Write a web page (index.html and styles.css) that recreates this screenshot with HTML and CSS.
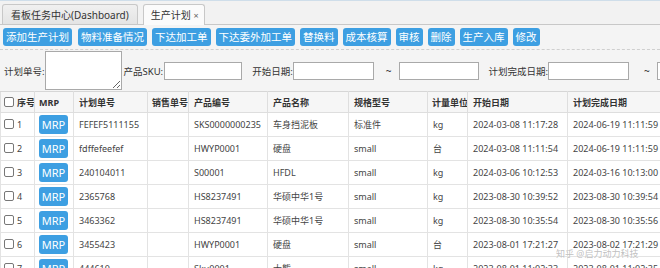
FILE: index.html
```html
<!DOCTYPE html>
<html lang="zh">
<head>
<meta charset="utf-8">
<title>生产计划</title>
<link rel="stylesheet" href="styles.css">
</head>
<body>
<div class="page">
  <div class="tabs">
    <div class="tab">看板任务中心(Dashboard)</div>
    <div class="tab active">生产计划 <span class="close">×</span></div>
  </div>
  <div class="toolbar">
    <span class="btn">添加生产计划</span>
    <span class="btn gap2">物料准备情况</span>
    <span class="btn">下达加工单</span>
    <span class="btn">下达委外加工单</span>
    <span class="btn">替换料</span>
    <span class="btn">成本核算</span>
    <span class="btn">审核</span>
    <span class="btn">删除</span>
    <span class="btn">生产入库</span>
    <span class="btn">修改</span>
  </div>
  <div class="filters">
    <span class="lbl">计划单号:</span><textarea class="ta"></textarea>
    <span class="lbl sku">产品SKU:</span><input class="inp w78" type="text">
    <span class="lbl start">开始日期:</span><input class="inp w81" type="text">
    <span class="tilde">~</span><input class="inp w80" type="text">
    <span class="lbl plan">计划完成日期:</span><input class="inp w81" type="text">
    <span class="tilde t2">~</span><input class="inp w80" type="text">
  </div>
  <table class="grid">
    <colgroup>
      <col class="c1"><col class="c2"><col class="c3"><col class="c4"><col class="c5">
      <col class="c6"><col class="c7"><col class="c8"><col class="c9"><col class="c10">
    </colgroup>
    <thead>
      <tr>
        <th class="chk"><span class="cb"></span>序号</th>
        <th class="mrph">MRP</th>
        <th>计划单号</th>
        <th class="narrow">销售单号</th>
        <th>产品编号</th>
        <th>产品名称</th>
        <th>规格型号</th>
        <th class="narrow">计量单位</th>
        <th>开始日期</th>
        <th>计划完成日期</th>
      </tr>
    </thead>
    <tbody>
      <tr><td class="chk"><span class="cb"></span>1</td><td class="mrpc"><span class="mrp">MRP</span></td><td>FEFEF5111155</td><td></td><td>SKS0000000235</td><td>车身挡泥板</td><td>标准件</td><td>kg</td><td>2024-03-08 11:17:28</td><td>2024-06-19 11:11:59</td></tr>
      <tr><td class="chk"><span class="cb"></span>2</td><td class="mrpc"><span class="mrp">MRP</span></td><td>fdffefeefef</td><td></td><td>HWYP0001</td><td>硬盘</td><td>small</td><td>台</td><td>2024-03-08 11:11:54</td><td>2024-06-19 11:11:59</td></tr>
      <tr><td class="chk"><span class="cb"></span>3</td><td class="mrpc"><span class="mrp">MRP</span></td><td>240104011</td><td></td><td>S00001</td><td>HFDL</td><td>small</td><td>kg</td><td>2024-03-06 10:12:53</td><td>2024-03-16 10:13:00</td></tr>
      <tr><td class="chk"><span class="cb"></span>4</td><td class="mrpc"><span class="mrp">MRP</span></td><td>2365768</td><td></td><td>HS8237491</td><td>华硕中华1号</td><td>small</td><td>kg</td><td>2023-08-30 10:39:52</td><td>2023-08-30 10:39:54</td></tr>
      <tr><td class="chk"><span class="cb"></span>5</td><td class="mrpc"><span class="mrp">MRP</span></td><td>3463362</td><td></td><td>HS8237491</td><td>华硕中华1号</td><td>small</td><td>kg</td><td>2023-08-30 10:35:54</td><td>2023-08-30 10:35:56</td></tr>
      <tr><td class="chk"><span class="cb"></span>6</td><td class="mrpc"><span class="mrp">MRP</span></td><td>3455423</td><td></td><td>HWYP0001</td><td>硬盘</td><td>small</td><td>台</td><td>2023-08-01 17:21:27</td><td>2023-08-02 17:21:29</td></tr>
      <tr><td class="chk"><span class="cb"></span>7</td><td class="mrpc"><span class="mrp">MRP</span></td><td>444610</td><td></td><td>Sku0001</td><td>大熊</td><td>small</td><td>kg</td><td>2023-08-01 11:02:33</td><td>2023-08-01 11:02:35</td></tr>
    </tbody>
  </table>
  <div class="watermark">知乎 @启力动力科技</div>
</div>
</body>
</html>
```
FILE: styles.css
```css
html, body {
  margin: 0;
  padding: 0;
  background: #ffffff;
}
body {
  width: 660px;
  height: 268px;
  overflow: hidden;
  font-family: "Noto Sans", "Noto Sans CJK SC", sans-serif;
  color: #333;
}
.page {
  position: relative;
  width: 660px;
  height: 268px;
  overflow: hidden;
  background: #f4f4f4;
}
.tabs {
  display: flex;
  align-items: flex-end;
  gap: 5px;
  height: 23px;
  padding-left: 2px;
  border-top: 1px solid #cfdeea;
  border-bottom: 1px solid #c8c8c8;
  background: #f2f2f2;
}
.tab {
  height: 20px;
  line-height: 20px;
  padding: 0 8px;
  font-size: 10px;
  color: #333;
  background: linear-gradient(#f0f0f0, #e4e4e4);
  border: 1px solid #c8c8c8;
  border-bottom: none;
  border-radius: 3px 3px 0 0;
  box-sizing: border-box;
  white-space: nowrap;
}
.tab.active {
  height: 21px;
  margin-bottom: -1px;
  padding: 0 5px 0 7px;
  background: #fbfbfb;
}
.close {
  font-size: 9px;
  color: #666;
}
.toolbar {
  display: flex;
  gap: 5px;
  padding: 3px 3px 3px 3px;
  border-bottom: 1px dashed #cfcfcf;
}
.btn {
  flex: none;
  display: inline-block;
  height: 18px;
  line-height: 18px;
  padding: 0 3px;
  font-size: 10.5px;
  color: #fff;
  background: #3d9fe2;
  border-radius: 3px;
  white-space: nowrap;
}
.btn.gap2 {
  margin-left: 1px;
}
.filters {
  display: flex;
  align-items: center;
  height: 41px;
  padding-left: 4px;
}
.filters > * {
  flex: none;
}
.lbl {
  font-size: 9.5px;
  color: #333;
  white-space: nowrap;
}
.ta {
  width: 77px;
  height: 39px;
  margin: 0;
  padding: 0;
  box-sizing: border-box;
  border: 1px solid #a9a9a9;
  background: #fff;
  resize: both;
}
.inp {
  height: 18px;
  margin: 0;
  padding: 0;
  box-sizing: border-box;
  border: 1px solid #a9a9a9;
  background: #fff;
}
.w78 { width: 78px; }
.w80 { width: 80px; }
.w81 { width: 81px; }
.sku { margin-left: 2px; margin-right: 1px; }
.start { margin-left: 10px; }
.plan { margin-left: 9px; }
.tilde {
  font-size: 10px;
  color: #333;
  margin: 0 8px 0 12px;
}
.tilde.t2 { margin: 0 7px 0 15px; }
.grid {
  table-layout: fixed;
  border-collapse: collapse;
  width: 667px;
  background: #fff;
  font-size: 9px;
  color: #444;
}
.c1 { width: 34px; }
.c2 { width: 39px; }
.c3 { width: 74px; }
.c4 { width: 41px; }
.c5 { width: 79px; }
.c6 { width: 81px; }
.c7 { width: 79px; }
.c8 { width: 40px; }
.c9 { width: 100px; }
.c10 { width: 100px; }
.grid th {
  height: 21px;
  padding: 0 0 0 5px;
  text-align: left;
  font-weight: bold;
  color: #333;
  background: #f6f6f6;
  border: 1px solid #dedede;
  border-top: 1px solid #d6d6d6;
  white-space: nowrap;
  overflow: hidden;
  box-sizing: border-box;
}
.grid td {
  height: 24px;
  padding: 0 0 0 5px;
  border: 1px solid #e3e3e3;
  white-space: nowrap;
  overflow: hidden;
  box-sizing: border-box;
}
.grid th.narrow { padding-left: 4px; }
.grid .chk { padding-left: 3px; }
.grid th.mrph { padding-left: 4px; }
.grid td.mrpc { padding-left: 4px; }
.cb {
  display: inline-block;
  width: 8px;
  height: 8px;
  margin-right: 3px;
  vertical-align: -1px;
  border: 1px solid #777;
  border-radius: 2px;
  background: #fff;
}
.mrp {
  display: inline-block;
  width: 29px;
  height: 19px;
  line-height: 19px;
  text-align: center;
  font-size: 11px;
  color: #fff;
  background: #3d9fe2;
  border-radius: 3px;
  vertical-align: middle;
}
.watermark {
  position: absolute;
  left: 556px;
  top: 247px;
  font-size: 9px;
  color: rgba(170, 170, 170, 0.75);
  text-shadow: 0 0 1px #fff;
  white-space: nowrap;
}
```
